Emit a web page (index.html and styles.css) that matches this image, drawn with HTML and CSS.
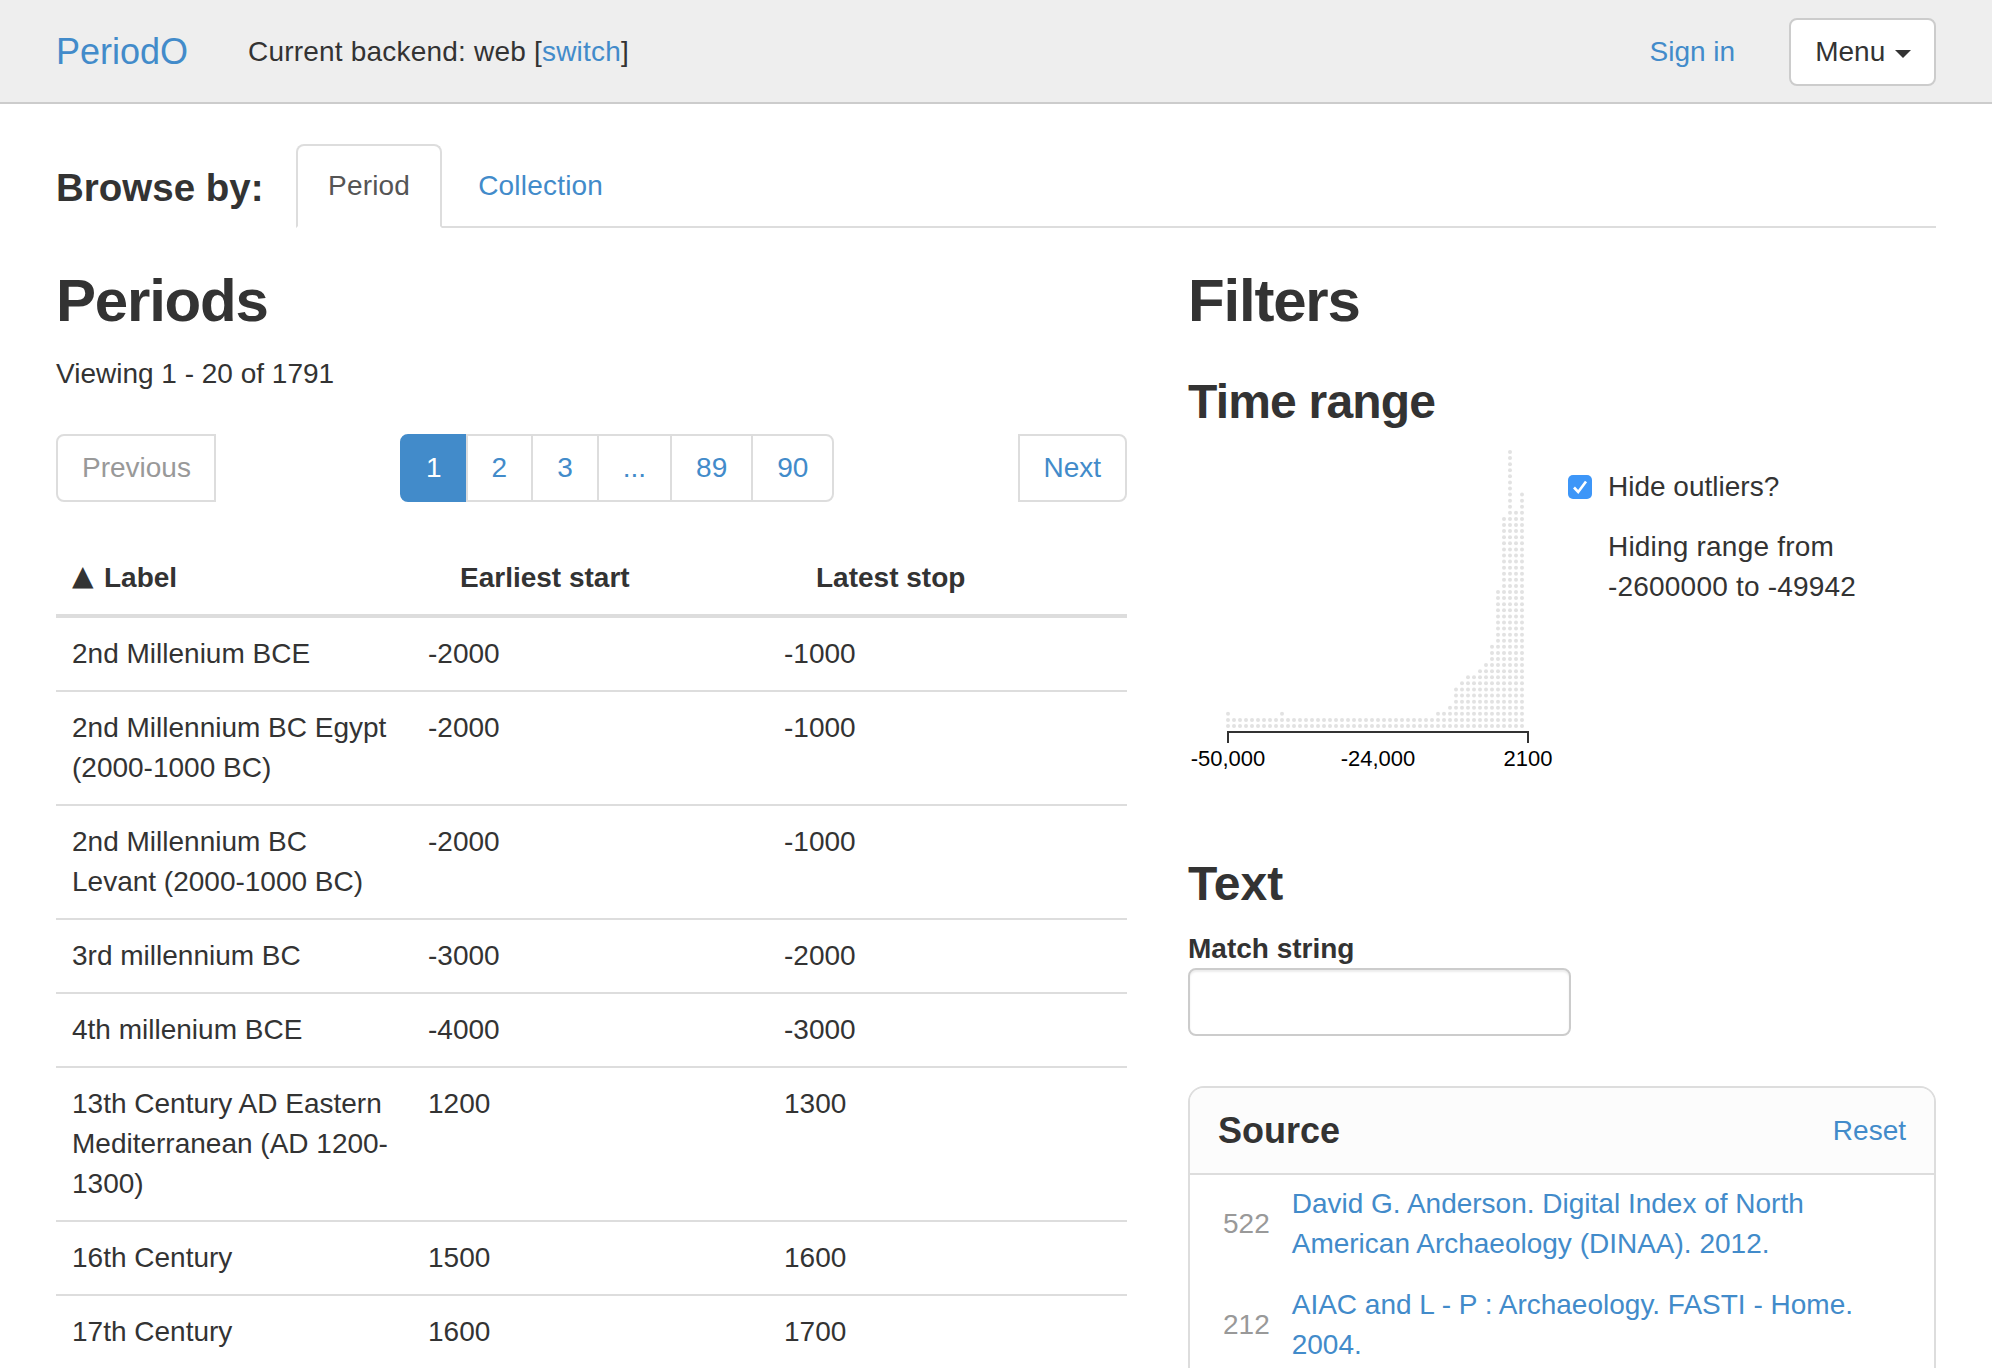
FILE: index.html
```html
<!DOCTYPE html>
<html lang="en">
<head>
  <meta charset="UTF-8">
  <title>PeriodO</title>
  <link rel="stylesheet" href="styles.css">
</head>
<body>

  <nav class="navbar">
    <a class="brand" href="#">PeriodO</a>
    <span class="backend">Current backend: web [<a href="#">switch</a>]</span>
    <a class="sign-in" href="#">Sign in</a>
    <button class="menu-btn">Menu <span class="caret"></span></button>
  </nav>

  <div class="browse">
    <h3 class="browse-title">Browse by:</h3>
    <ul class="tabs">
      <li class="tab active"><a href="#">Period</a></li>
      <li class="tab"><a href="#">Collection</a></li>
    </ul>
  </div>

  <div class="main">
    <section class="periods">
      <h2>Periods</h2>
      <p class="viewing">Viewing 1 - 20 of 1791</p>

      <div class="pager">
        <a class="pager-btn prev" href="#">Previous</a>
        <ul class="pages">
          <li class="current"><a href="#">1</a></li>
          <li><a href="#">2</a></li>
          <li><a href="#">3</a></li>
          <li><a href="#">...</a></li>
          <li><a href="#">89</a></li>
          <li><a href="#">90</a></li>
        </ul>
        <a class="pager-btn next" href="#">Next</a>
      </div>

      <table class="period-table">
        <thead>
          <tr>
            <th><span class="sort">▲</span>Label</th>
            <th><span class="sort"></span>Earliest start</th>
            <th><span class="sort"></span>Latest stop</th>
          </tr>
        </thead>
        <tbody>
          <tr><td>2nd Millenium BCE</td><td>-2000</td><td>-1000</td></tr>
          <tr><td>2nd Millennium BC Egypt (2000-1000 BC)</td><td>-2000</td><td>-1000</td></tr>
          <tr><td>2nd Millennium BC Levant (2000-1000 BC)</td><td>-2000</td><td>-1000</td></tr>
          <tr><td>3rd millennium BC</td><td>-3000</td><td>-2000</td></tr>
          <tr><td>4th millenium BCE</td><td>-4000</td><td>-3000</td></tr>
          <tr><td>13th Century AD Eastern Mediterranean (AD 1200-1300)</td><td>1200</td><td>1300</td></tr>
          <tr><td>16th Century</td><td>1500</td><td>1600</td></tr>
          <tr><td>17th Century</td><td>1600</td><td>1700</td></tr>
        </tbody>
      </table>
    </section>

    <section class="filters">
      <h2>Filters</h2>

      <h3 class="filter-title time-title">Time range</h3>
      <div class="time-range">
        <svg class="histogram" width="380" height="330" viewBox="0 0 380 330">
          <g id="dots" fill="#e2e2e2"></g>
          <path class="axis" d="M40 295V284H340V295"></path>
          <text x="40" y="318">-50,000</text>
          <text x="190" y="318">-24,000</text>
          <text x="340" y="318">2100</text>
        </svg>
        <div class="outliers">
          <div class="outlier-check">
            <span class="checkbox">
              <svg width="24" height="24" viewBox="0 0 24 24"><path d="M6 12.5l4.2 4.5L18 6.5" fill="none" stroke="#fff" stroke-width="2.6"></path></svg>
            </span>
            Hide outliers?
          </div>
          <p class="hiding">Hiding range from<br>-2600000 to -49942</p>
        </div>
      </div>

      <h3 class="filter-title text-title">Text</h3>
      <label class="match-label" for="match">Match string</label>
      <input class="match-input" id="match" type="text">

      <div class="panel">
        <div class="panel-heading">
          <h4>Source</h4>
          <a href="#">Reset</a>
        </div>
        <div class="panel-body">
          <div class="source-row">
            <span class="count">522</span>
            <a href="#">David G. Anderson. Digital Index of North American Archaeology (DINAA). 2012.</a>
          </div>
          <div class="source-row">
            <span class="count">212</span>
            <a href="#">AIAC and L - P : Archaeology. FASTI - Home. 2004.</a>
          </div>
        </div>
      </div>
    </section>
  </div>

  <script src="chart.js"></script>
</body>
</html>
```

FILE: styles.css
```css
html, body {
  height: 100%;
  overflow: hidden;
}

body {
  margin: 0;
  font-family: "Liberation Sans", Arial, sans-serif;
  font-size: 28px;
  line-height: 40px;
  color: #333;
  background-color: #fff;
}

a {
  color: #428bca;
  text-decoration: none;
}

h2, h3, h4, p, ul {
  margin: 0;
  padding: 0;
}

ul {
  list-style: none;
}

.navbar {
  display: flex;
  align-items: center;
  height: 100px;
  padding: 2px 56px 0;
  background-color: #eee;
  border-bottom: 2px solid #ccc;
}

.brand {
  font-size: 36px;
}

.backend {
  margin-left: 60px;
  letter-spacing: 0.2px;
}

.sign-in {
  margin-left: auto;
}

.menu-btn {
  height: 68px;
  margin-left: 54px;
  padding: 0 23px 0 24px;
  font: inherit;
  color: #333;
  background-color: #fff;
  border: 2px solid #ccc;
  border-radius: 8px;
}

.caret {
  display: inline-block;
  margin-left: 2px;
  vertical-align: middle;
  border-top: 8px solid #333;
  border-left: 8px solid transparent;
  border-right: 8px solid transparent;
}

.browse {
  display: flex;
  align-items: flex-end;
  margin: 40px 56px 0;
}

.browse-title {
  width: 240px;
  padding-bottom: 20px;
  font-size: 38.5px;
  font-weight: bold;
}

.tabs {
  display: flex;
  flex: 1;
  border-bottom: 2px solid #ddd;
}

.tab {
  margin-right: 4px;
  margin-bottom: -2px;
  padding: 20px 30px;
  letter-spacing: 0.2px;
  border: 2px solid transparent;
  border-radius: 8px 8px 0 0;
}

.tab.active {
  border-color: #ddd;
  border-bottom-color: #fff;
}

.tab.active a {
  color: #555;
}

.main {
  display: flex;
  gap: 61px;
  margin: 0 56px;
}

.periods {
  width: 1071px;
  flex: none;
}

.filters {
  width: 748px;
  flex: none;
}

h2 {
  margin-top: 40px;
  font-size: 60px;
  line-height: 66px;
  font-weight: bold;
  letter-spacing: -1.2px;
}

.viewing {
  margin-top: 20px;
}

.pager {
  display: flex;
  justify-content: space-between;
  margin: 40px 0;
}

.pager-btn {
  padding: 12px 24px;
  background-color: #fff;
  border: 2px solid #ddd;
}

.prev {
  padding-right: 23px;
  color: #999;
  border-radius: 8px 0 0 8px;
}

.next {
  padding-left: 23px;
  border-radius: 0 8px 8px 0;
}

.pages {
  display: flex;
}

.pages a {
  display: block;
  margin-left: -2px;
  padding: 12px 24px;
  background-color: #fff;
  border: 2px solid #ddd;
}

.pages li:first-child a {
  margin-left: 0;
  border-radius: 8px 0 0 8px;
}

.pages li:last-child a {
  border-radius: 0 8px 8px 0;
}

.pages .current a {
  color: #fff;
  background-color: #428bca;
  border-color: #428bca;
}

.period-table {
  width: 100%;
  table-layout: fixed;
  border-collapse: separate;
  border-spacing: 0;
}

.period-table th,
.period-table td {
  padding: 16px;
  text-align: left;
  vertical-align: top;
}

.period-table th {
  border-bottom: 4px solid #ddd;
}

.period-table td {
  border-bottom: 2px solid #ddd;
}

.period-table th:nth-child(1),
.period-table th:nth-child(2) {
  width: 324px;
}

.sort {
  display: inline-block;
  width: 32px;
  font-family: "DejaVu Sans", sans-serif;
  font-size: 28px;
  line-height: 30px;
  vertical-align: 2px;
}

.filter-title {
  margin-top: 41px;
  font-size: 48px;
  line-height: 53px;
  font-weight: bold;
}

.time-title {
  letter-spacing: -0.8px;
}

.time-range {
  display: flex;
  margin-top: 20px;
}

.histogram {
  flex: none;
}

.histogram text {
  font-size: 22px;
  text-anchor: middle;
  fill: #000;
}

.axis {
  fill: none;
  stroke: #333;
  stroke-width: 2;
}

.outliers {
  padding-top: 19px;
}

.outlier-check {
  display: flex;
  align-items: center;
  gap: 16px;
}

.checkbox {
  display: block;
  width: 24px;
  height: 24px;
  background-color: #3d96f8;
  border-radius: 5px;
}

.checkbox svg {
  display: block;
}

.hiding {
  margin-top: 20px;
  margin-left: 40px;
  letter-spacing: 0.2px;
}

.text-title {
  margin-top: 79px;
}

.match-label {
  display: block;
  margin-top: 20px;
  line-height: 38px;
  font-weight: bold;
}

.match-input {
  display: block;
  box-sizing: border-box;
  width: 383px;
  height: 68px;
  background-color: #fff;
  border: 2px solid #ccc;
  border-radius: 8px;
  box-shadow: inset 0 2px 2px rgba(0,0,0,0.075);
}

.panel {
  margin-top: 50px;
  border: 2px solid #ddd;
  border-radius: 16px 16px 0 0;
}

.panel-heading {
  display: flex;
  justify-content: space-between;
  align-items: center;
  height: 85px;
  padding: 0 28px;
  background-color: #fcfcfc;
  border-bottom: 2px solid #ddd;
  border-radius: 14px 14px 0 0;
}

.panel-heading h4 {
  font-size: 36px;
  font-weight: bold;
}

.panel-body {
  padding: 9px 28px 0 33px;
}

.source-row {
  display: flex;
  align-items: center;
  gap: 22px;
  margin-bottom: 21px;
}

.count {
  color: #999;
}
```

FILE: chart.js
```js
// number of dots in each column of the histogram, left to right
const columns = [
  3, 2, 2, 2, 2, 2, 2, 2, 2, 3,
  2, 2, 2, 2, 2, 2, 2, 2, 2, 2,
  2, 2, 2, 2, 2, 2, 2, 2, 2, 2,
  2, 2, 2, 2, 2, 3, 3, 4, 7, 8,
  9, 9, 10, 11, 14, 23, 35, 46, 36, 39
];

const dots = document.getElementById('dots');

columns.forEach((count, col) => {
  for (let row = 0; row < count; row++) {
    const dot = document.createElementNS('http://www.w3.org/2000/svg', 'circle');
    dot.setAttribute('cx', 40 + col * 6);
    dot.setAttribute('cy', 278 - row * 6.09);
    dot.setAttribute('r', 2);
    dots.appendChild(dot);
  }
});
```
